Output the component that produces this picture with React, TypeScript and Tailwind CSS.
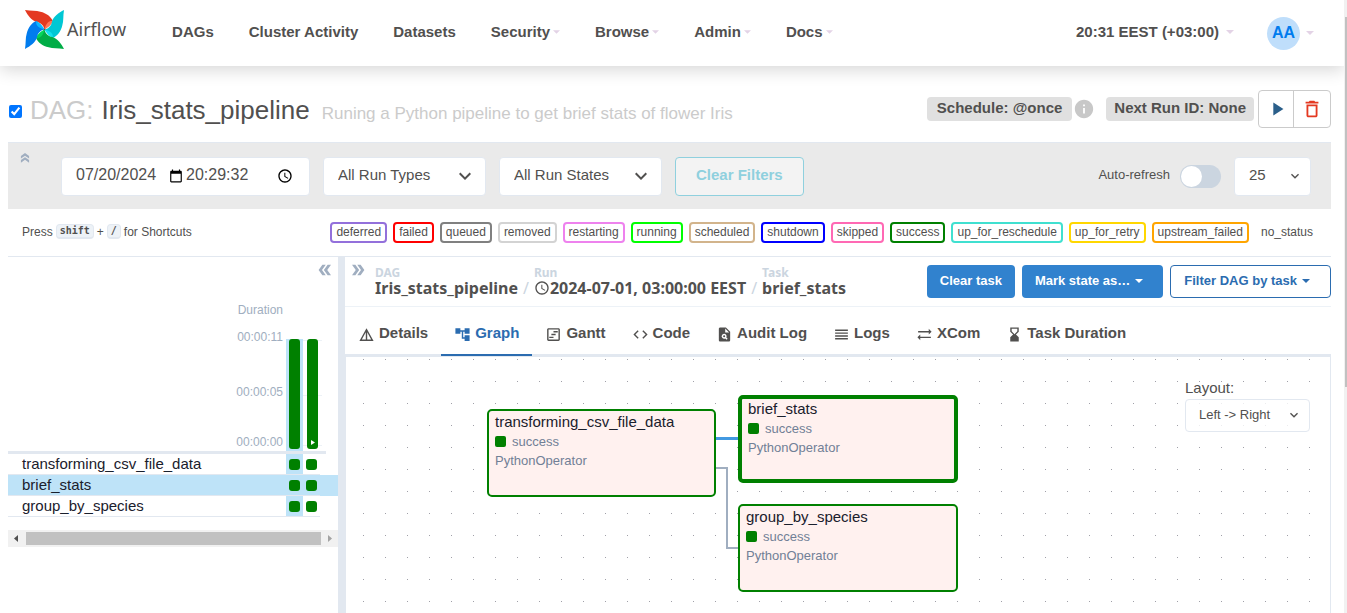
import React from "react";
import {
  MdAccessTime,
  MdAccountTree,
  MdCalendarToday,
  MdCode,
  MdDeleteOutline,
  MdDetails,
  MdDoubleArrow,
  MdExpandMore,
  MdHourglassBottom,
  MdInfo,
  MdOutlineViewTimeline,
  MdPlagiarism,
  MdPlayArrow,
  MdReorder,
  MdSyncAlt,
} from "react-icons/md";

const BLADE = "M0 0C18 3 34 1 46 5C64 9 79 20 84 34L58.5 58.5C57 48 48 38 35 36C20 32 8 16 0 0Z";
const FOLD = "M84 34C74 31 63 38 58.500 58.500C66 55 79 46 84 34Z";
const BLADES = [
  { angle: "rotate(0 58.5 58.5)", main: "#e43921", fold: "#ff7557" },
  { angle: "rotate(90 58.5 58.5)", main: "#00c7d4", fold: "#11e1ee" },
  { angle: "rotate(180 58.5 58.5)", main: "#00ad46", fold: "#04d659" },
  { angle: "rotate(270 58.5 58.5)", main: "#017cee", fold: "#0cb6ff" },
];

function Logo() {
  return (
    <a href="#home" className="flex items-center gap-[3px] text-[#51504f]">
      <svg viewBox="0 0 117 117" className="h-[39px] w-[39px]" aria-hidden="true">
        {BLADES.map((b) => (
          <g key={b.angle} transform={b.angle}>
            <path d={BLADE} fill={b.main} />
            <path d={FOLD} fill={b.fold} />
          </g>
        ))}
        <circle cx="58.5" cy="58.5" r="2.5" fill="#51504f" />
      </svg>
      <span className="font-['Noto_Sans',sans-serif] text-[18px] leading-6">Airflow</span>
    </a>
  );
}

function Caret({ className }: { className: string }) {
  return (
    <svg viewBox="0 0 8 4" className={`h-1 shrink-0 ${className}`} aria-hidden="true">
      <path d="M0 0h8L4 4z" fill="currentColor" />
    </svg>
  );
}

const NAV = [
  { label: "DAGs", menu: false },
  { label: "Cluster Activity", menu: false },
  { label: "Datasets", menu: false },
  { label: "Security", menu: true },
  { label: "Browse", menu: true },
  { label: "Admin", menu: true },
  { label: "Docs", menu: true },
];

function Header() {
  return (
    <header className="flex h-[66px] items-center bg-white pr-[30px] pb-0.5 pl-[25px] shadow-[0_4px_16px_rgba(0,0,0,0.16)]">
      <div className="mr-[46px] pb-1.5">
        <Logo />
      </div>
      <nav className="flex flex-1 gap-[35px] text-[15px] leading-6 font-bold">
        {NAV.map((n) => (
          <a key={n.label} href={`#${n.label}`} className="flex items-center gap-[3px] whitespace-nowrap">
            {n.label}
            {n.menu && <Caret className="w-[7px] text-[#e3d3e6]" />}
          </a>
        ))}
      </nav>
      <button className="mr-[33px] flex items-center gap-[7px] text-[15px] leading-6 font-bold">
        20:31 EEST (+03:00)
        <Caret className="w-2 text-[#e3d3e6]" />
      </button>
      <button className="flex items-center gap-1.5 pt-0.5" aria-label="User menu">
        <span className="flex h-[33px] w-[33px] items-center justify-center rounded-full bg-[#bfdefb] text-base font-bold text-[#017cee]">
          AA
        </span>
        <Caret className="w-2 text-[#e3d3e6]" />
      </button>
    </header>
  );
}

function TitleRow() {
  return (
    <div className="flex h-[76px] items-center">
      <input
        type="checkbox"
        defaultChecked
        aria-label="Toggle DAG"
        className="mt-3.5 mr-2 ml-px h-[13px] w-[13px] accent-[#0075ff]"
      />
      <h1 className="mt-[15px] flex flex-1 items-baseline text-[26px] leading-8">
        <span className="mr-2 text-[#cbcbcb]">DAG:</span>
        <span>Iris_stats_pipeline</span>
        <small className="ml-3 text-[17px] text-[#cbcbcb]">
          Runing a Python pipeline to get brief stats of flower Iris
        </small>
      </h1>
      <div className="mt-2.5 flex items-center text-[15px] font-bold">
        <span className="rounded bg-[#e0e0e0] px-2.5 pb-0.5 leading-[22px]">Schedule: @once</span>
        <MdInfo className="mx-px h-[22px] w-[22px] text-[#c8c8c8]" />
        <span className="mr-1 ml-2.5 rounded bg-[#e0e0e0] px-2 pb-0.5 leading-[22px]">Next Run ID: None</span>
        <div className="flex h-[38px] rounded border border-[#cbcbcb]">
          <button aria-label="Trigger DAG" className="flex w-[35px] items-center justify-center border-r border-[#cbcbcb] pl-px">
            <MdPlayArrow className="h-[22px] w-[22px] text-[#2b5f8a]" />
          </button>
          <button aria-label="Delete DAG" className="flex w-9 items-center justify-center">
            <MdDeleteOutline className="h-[22px] w-[22px] text-[#e43921]" />
          </button>
        </div>
      </div>
    </div>
  );
}

function Picker({ label, value, width, icon }: { label: string; value: string; width: string; icon: string }) {
  return (
    <div className={`relative h-[39px] ${width}`}>
      <select
        aria-label={label}
        className="h-full w-full appearance-none rounded border border-[#e2e8f0] bg-white px-3.5 pb-0.5 text-[15px] text-[#51504f]"
      >
        <option>{value}</option>
      </select>
      <MdExpandMore className={`pointer-events-none absolute top-1/2 -translate-y-1/2 ${icon}`} />
    </div>
  );
}

function Filters() {
  return (
    <div className="flex h-[67px] items-center border-t border-[#e2e8f0] bg-[#eaeaea] pr-5">
      <button aria-label="Hide filters" className="mr-[29px] ml-2.5 self-start pt-2">
        <MdDoubleArrow className="h-3.5 w-3.5 -rotate-90 text-[#a0aec0]" />
      </button>
      <div className="mr-[13px] flex h-[39px] w-[249px] items-center rounded border border-[#e2e8f0] bg-white pl-3.5 text-base">
        <input aria-label="Date" defaultValue="07/20/2024" className="w-[93px] bg-transparent pb-0.5" />
        <MdCalendarToday className="h-3.5 w-3.5 text-black" />
        <input aria-label="Time" defaultValue="20:29:32" className="ml-[3px] w-[91px] bg-transparent pb-0.5" />
        <MdAccessTime className="h-4 w-4 text-black" />
      </div>
      <div className="mr-[13px]">
        <Picker label="Run type" value="All Run Types" width="w-[163px]" icon="right-[9px] h-6 w-6" />
      </div>
      <div className="mr-[13px]">
        <Picker label="Run state" value="All Run States" width="w-[163px]" icon="right-[9px] h-6 w-6" />
      </div>
      <button className="h-[39px] rounded border border-[#8fd0de] bg-[#f3f3f3] px-5 pb-px text-[15px] font-bold text-[#8fd0de]">
        Clear Filters
      </button>
      <div className="flex-1" />
      <label htmlFor="refresh" className="mr-2.5 pb-0.5 text-[13px]">
        Auto-refresh
      </label>
      <input id="refresh" type="checkbox" role="switch" className="peer sr-only" />
      <label
        htmlFor="refresh"
        aria-hidden="true"
        className="mr-[13px] flex h-[23px] w-[41px] items-center rounded-full bg-[#cbd5e0] px-px"
      >
        <span className="h-[21px] w-[21px] rounded-full bg-white" />
      </label>
      <Picker label="Number of runs" value="25" width="w-[77px]" icon="right-2 h-4 w-4" />
    </div>
  );
}

const STATES = [
  { label: "deferred", color: "border-[#9370db]" },
  { label: "failed", color: "border-[#ff0000]" },
  { label: "queued", color: "border-[#808080]" },
  { label: "removed", color: "border-[#d3d3d3]" },
  { label: "restarting", color: "border-[#ee82ee]" },
  { label: "running", color: "border-[#00ff00]" },
  { label: "scheduled", color: "border-[#d2b48c]" },
  { label: "shutdown", color: "border-[#0000ff]" },
  { label: "skipped", color: "border-[#ff69b4]" },
  { label: "success", color: "border-[#008000]" },
  { label: "up_for_reschedule", color: "border-[#40e0d0]" },
  { label: "up_for_retry", color: "border-[#ffd700]" },
  { label: "upstream_failed", color: "border-[#ffa500]" },
  { label: "no_status", color: "border-transparent" },
];

function Key({ children }: { children: React.ReactNode }) {
  return (
    <kbd className="rounded border border-b-2 border-[#e2e8f0] bg-[#edf2f7] px-[3px] font-['DejaVu_Sans_Mono',monospace] text-[10px] leading-3 font-bold">
      {children}
    </kbd>
  );
}

function Legend() {
  return (
    <div className="flex h-12 items-center justify-between border-b border-[#e2e8f0] pr-3 pl-3.5 text-xs leading-4">
      <p className="flex items-center gap-[3px] pb-0.5">
        Press <Key>shift</Key> + <Key>/</Key> for Shortcuts
      </p>
      <ul className="flex gap-1.5">
        {STATES.map((s) => (
          <li key={s.label} className={`rounded border-2 px-1 pb-px ${s.color}`}>
            {s.label}
          </li>
        ))}
      </ul>
    </div>
  );
}

const TASKS = ["transforming_csv_file_data", "brief_stats", "group_by_species"];

function TaskGrid() {
  return (
    <section className="flex w-[330px] shrink-0 flex-col">
      <button aria-label="Hide grid" className="mt-1 mr-1 self-end">
        <MdDoubleArrow className="h-[18px] w-[18px] rotate-180 text-[#a0aec0]" />
      </button>
      <div className="mt-[21px] pr-[55px] text-right text-xs leading-5 text-[#a0aec0]">Duration</div>
      <div className="mt-[9px] flex h-[122px] justify-end pr-4 text-xs leading-4 text-[#a0aec0]">
        <div className="mr-[3px] flex flex-col text-right">
          <span>00:00:11</span>
          <span className="mt-[39px]">00:00:05</span>
          <span className="mt-[34px]">00:00:00</span>
        </div>
        <div className="relative mt-2.5 flex w-[36px]">
          <div className="absolute top-px h-px w-full bg-[#edf2f7]" />
          <div className="absolute top-14 h-px w-full bg-[#edf2f7]" />
          <div className="absolute top-[106px] h-px w-full bg-[#edf2f7]" />
          <button aria-label="Run 2024-07-01" className="relative flex w-[17px] justify-center bg-[#bee3f8]">
            <span className="h-[110px] w-[11px] rounded-[3px] bg-[#008000]" />
          </button>
          <button aria-label="Manual run" className="relative flex w-[19px] justify-center">
            <span className="flex h-[110px] w-[11px] items-end justify-center rounded-[3px] bg-[#008000] pb-1">
              <svg viewBox="0 0 4 5" className="h-[5px] w-1" aria-hidden="true">
                <path d="M0 0l4 2.5L0 5z" fill="white" />
              </svg>
            </span>
          </button>
        </div>
      </div>
      <div className="mr-3 h-[3px] bg-[#e2e8f0]" />
      <table className="w-full border-separate border-spacing-0 text-[15px] leading-5 text-[#1a202c]">
        <tbody>
          {TASKS.map((t) => {
            const on = t === "brief_stats";
            return (
              <tr key={t} className={on ? "bg-[#bee3f8]" : ""}>
                <th scope="row" className="h-[21px] border-b border-[#e2e8f0] p-0 pl-3.5 text-left font-normal">
                  {t}
                </th>
                <td className="w-[17px] border-b border-[#e2e8f0] bg-[#bee3f8] p-0">
                  <span className="mx-auto block h-[11px] w-[11px] rounded-[3px] bg-[#008000]" />
                </td>
                <td className="w-[17px] border-b border-[#e2e8f0] p-0">
                  <span className="mx-auto block h-[11px] w-[11px] rounded-[3px] bg-[#008000]" />
                </td>
                <td className="w-[18px] p-0" />
              </tr>
            );
          })}
        </tbody>
      </table>
      <div className="mt-[13px] flex h-[17px] items-center bg-[#f1f1f1]">
        <svg viewBox="0 0 18 17" className="h-[17px] w-[18px]" aria-hidden="true">
          <path d="M10 5v7L6 8.500z" fill="#505050" />
        </svg>
        <div className="h-[13px] flex-1 bg-[#c1c1c1]" />
        <svg viewBox="0 0 17 17" className="h-[17px] w-[17px]" aria-hidden="true">
          <path d="M7 5v7l4-3.500z" fill="#a3a3a3" />
        </svg>
      </div>
    </section>
  );
}

function Crumb({ label, icon, children }: { label: string; icon?: React.ReactNode; children: React.ReactNode }) {
  return (
    <li className="flex flex-col font-bold">
      <span className="text-xs leading-[15px] text-[#cbd5e0]">{label}</span>
      <a href={`#${label}`} className="flex items-center text-base leading-4">
        {icon}
        {children}
      </a>
    </li>
  );
}

function DetailsHeader() {
  return (
    <div className="flex h-[50px] items-start border-b border-[#edf2f7]">
      <button aria-label="Show details" className="mt-1 mr-2 ml-1">
        <MdDoubleArrow className="h-[18px] w-[18px] text-[#a0aec0]" />
      </button>
      <ol className="mt-2 flex flex-1 items-end gap-[5px] font-['Noto_Sans',sans-serif] whitespace-nowrap">
        <Crumb label="DAG">Iris_stats_pipeline</Crumb>
        <li className="text-base leading-4 text-[#cbd5e0]" aria-hidden="true">/</li>
        <Crumb label="Run" icon={<MdAccessTime className="h-4 w-4" />}>
          2024-07-01, 03:00:00 EEST
        </Crumb>
        <li className="text-base leading-4 text-[#cbd5e0]" aria-hidden="true">/</li>
        <Crumb label="Task">brief_stats</Crumb>
      </ol>
      <div className="mt-2 flex h-[33px] gap-[7px] text-[13px] font-bold whitespace-nowrap">
        <button className="rounded bg-[#3182ce] px-[13px] pb-0.5 text-white">Clear task</button>
        <button className="flex items-center gap-[5px] rounded bg-[#3182ce] pr-5 pb-0.5 pl-[13px] text-white">
          Mark state as… <Caret className="w-2 text-white" />
        </button>
        <button className="flex items-center gap-[5px] rounded border border-[#2b6cb0] pr-5 pb-0.5 pl-[13px] text-[#2b6cb0]">
          Filter DAG by task <Caret className="w-2 text-[#2b6cb0]" />
        </button>
      </div>
    </div>
  );
}

const TABS = [
  { label: "Details", Icon: MdDetails },
  { label: "Graph", Icon: MdAccountTree },
  { label: "Gantt", Icon: MdOutlineViewTimeline },
  { label: "Code", Icon: MdCode },
  { label: "Audit Log", Icon: MdPlagiarism },
  { label: "Logs", Icon: MdReorder },
  { label: "XCom", Icon: MdSyncAlt },
  { label: "Task Duration", Icon: MdHourglassBottom },
];

function Tabs() {
  return (
    <div role="tablist" className="flex h-[50px] border-b-[3px] border-[#e2e8f0]">
      {TABS.map(({ label, Icon }) => {
        const on = label === "Graph";
        return (
          <button
            key={label}
            role="tab"
            aria-selected={on}
            className={`-mb-0.5 flex items-center gap-1 border-b-2 px-[13px] pt-1.5 text-[15px] font-bold whitespace-nowrap ${
              on ? "border-[#2b6cb0] text-[#2b6cb0]" : "border-transparent"
            }`}
          >
            <Icon className="mt-0.5 h-[17px] w-[17px]" />
            {label}
          </button>
        );
      })}
    </div>
  );
}

const NODES = [
  { name: "transforming_csv_file_data", box: "top-[52px] left-[141px] w-[229px] border-2 pt-px" },
  { name: "brief_stats", box: "top-[38px] left-[392px] w-[220px] border-4" },
  { name: "group_by_species", box: "top-[147px] left-[392px] w-[220px] border-2 pt-px" },
];

function Graph() {
  return (
    <div className="relative flex-1 overflow-hidden border-x border-[#e2e8f0]">
      <svg className="absolute inset-0 h-full w-full" aria-hidden="true">
        <defs>
          <pattern id="dots" width="22" height="22" patternUnits="userSpaceOnUse">
            <rect x="17" y="2" width="1" height="1" fill="#a0a0a8" />
          </pattern>
        </defs>
        <rect width="100%" height="100%" fill="url(#dots)" />
        <path d="M369 111h12v80h12" fill="none" stroke="#a0aec0" strokeWidth="2" />
        <path d="M369 81.500h24" fill="none" stroke="#4299e1" strokeWidth="3" />
      </svg>
      {NODES.map((n) => (
        <div key={n.name} className={`absolute h-[88px] rounded-[5px] border-[#008000] bg-[#fff1ef] px-1.5 ${n.box}`}>
          <div className="text-[15px] leading-5 text-[#1a202c]">{n.name}</div>
          <div className="flex items-center gap-1.5 text-[13px] leading-[19px] text-[#718096]">
            <span className="h-[11px] w-[11px] rounded-[2px] bg-[#008000]" />
            success
          </div>
          <div className="text-[13px] leading-[19px] text-[#718096]">PythonOperator</div>
        </div>
      ))}
      <div className="absolute top-5 right-5 w-[125px]">
        <label htmlFor="layout" className="block text-[15px] leading-[22px]">
          Layout:
        </label>
        <div className="relative h-[33px]">
          <select
            id="layout"
            className="h-full w-full appearance-none rounded border border-[#e2e8f0] bg-white/80 px-[13px] pb-0.5 text-[13px]"
          >
            <option>Left -&gt; Right</option>
          </select>
          <MdExpandMore className="pointer-events-none absolute top-2 right-2 h-4 w-4" />
        </div>
      </div>
    </div>
  );
}

export default function App() {
  return (
    <div className="flex h-screen overflow-hidden bg-white font-['Liberation_Sans',Arial,sans-serif] text-[#51504f]">
      <div className="flex min-w-0 flex-1 flex-col overflow-hidden">
        <Header />
        <main className="flex min-h-0 flex-1 flex-col pr-[13px] pl-2">
          <TitleRow />
          <Filters />
          <Legend />
          <div className="flex min-h-0 flex-1">
            <TaskGrid />
            <div className="w-[7px] shrink-0 bg-[#e2e8f0]" />
            <section className="flex min-w-0 flex-1 flex-col">
              <DetailsHeader />
              <Tabs />
              <Graph />
            </section>
          </div>
        </main>
      </div>
      <div className="w-[3px] shrink-0 bg-[#f1f1f1] pt-[17px]" aria-hidden="true">
        <div className="ml-px h-[62%] bg-[#c1c1c1]" />
      </div>
    </div>
  );
}
